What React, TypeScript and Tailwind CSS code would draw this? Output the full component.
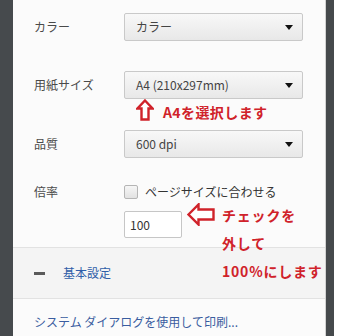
import React from "react";

const jp = { fontFamily: '"Noto Sans CJK JP", "Noto Sans", sans-serif' };

function Select({ value }: { value: string }) {
  return (
    <div className="flex h-[28px] w-[179px] items-center justify-between rounded-[2px] border border-[#c9c9c9] bg-gradient-to-b from-[#f8f8f8] to-[#e8e8e8] pl-[11px] pr-[9px] text-[12px] text-[#444]">
      <span>{value}</span>
      <svg width="8" height="5" viewBox="0 0 8 5">
        <polygon points="0,0 8,0 4,5" fill="#111" />
      </svg>
    </div>
  );
}

function Row({ label, children, className }: { label: string; children: React.ReactNode; className?: string }) {
  return (
    <div className={"flex items-center " + (className ?? "")}>
      <div className="w-[90px] text-[12px] text-[#4a4a4a]">{label}</div>
      {children}
    </div>
  );
}

export default function App() {
  return (
    <div className="flex h-[336px] w-[357px] overflow-hidden bg-white" style={jp}>
      <div className="w-[13px] shrink-0 bg-[#464a4d]" />
      <div className="relative flex w-[312px] shrink-0 flex-col bg-[#fbfbfb]">
        <div className="flex flex-col pl-[21px] pt-[13px]">
          <Row label="カラー">
            <Select value="カラー" />
          </Row>
          <Row label="用紙サイズ" className="mt-[30px]">
            <Select value="A4 (210x297mm)" />
          </Row>
          <Row label="品質" className="mt-[31px]">
            <Select value="600 dpi" />
          </Row>
          <Row label="倍率" className="mt-[25px]">
            <div className="flex items-center gap-[7px] text-[12px] text-[#333]">
              <div className="h-[14px] w-[14px] rounded-[2px] border border-[#b5b5b5] bg-gradient-to-b from-[#f6f6f6] to-[#e2e2e2]" />
              <span>ページサイズに合わせる</span>
            </div>
          </Row>
          <div className="ml-[90px] mt-[10px] flex h-[27px] w-[58px] items-center rounded-[2px] border border-[#c6c6c6] bg-white pl-[5px] text-[12px] text-[#333]">
            100
          </div>
        </div>
        <div className="mt-[9px] h-[52px] border-y border-[#e2e2e2] bg-[#f4f4f4]">
          <div className="flex h-full items-center pl-[21px]">
            <div className="h-[3px] w-[11px] bg-[#5a5a5a]" />
            <span className="ml-[18px] text-[12px] text-[#2f5ea8]">基本設定</span>
          </div>
        </div>
        <div className="flex flex-1 items-center pl-[21px] pt-[8px] text-[12px] text-[#3a5da0]">
          システム ダイアログを使用して印刷...
        </div>

        {/* annotations */}
        <svg className="absolute left-[123px] top-[99px]" width="18" height="22" viewBox="0 0 18 22">
          <polygon points="9,1.5 16.5,9.5 12.5,9.5 12.5,20.5 5.5,20.5 5.5,9.5 1.5,9.5" fill="white" stroke="#d0222a" strokeWidth="2.4" strokeLinejoin="miter" />
        </svg>
        <div className="absolute left-[150px] top-[102px] text-[14px] font-bold leading-[20px] tracking-[0.4px] text-[#d0222a]">
          A4を選択します
        </div>
        <svg className="absolute left-[174px] top-[203px]" width="28" height="23" viewBox="0 0 28 23">
          <polygon points="1.5,11.5 11.5,1.5 11.5,6.5 26.5,6.5 26.5,16.5 11.5,16.5 11.5,21.5" fill="white" stroke="#d0222a" strokeWidth="2.4" />
        </svg>
        <div className="absolute left-[209px] top-[201px] flex flex-col text-[14px] font-bold leading-[28px] tracking-[0.8px] text-[#d0222a]">
          <span>チェックを</span>
          <span>外して</span>
          <span className="whitespace-nowrap">100%にします</span>
        </div>
      </div>
      <div className="w-px shrink-0 bg-[#d2d2d2]" />
      <div className="w-[8px] shrink-0 bg-[#45494c]" />
      <div className="flex-1 bg-white" />
    </div>
  );
}
